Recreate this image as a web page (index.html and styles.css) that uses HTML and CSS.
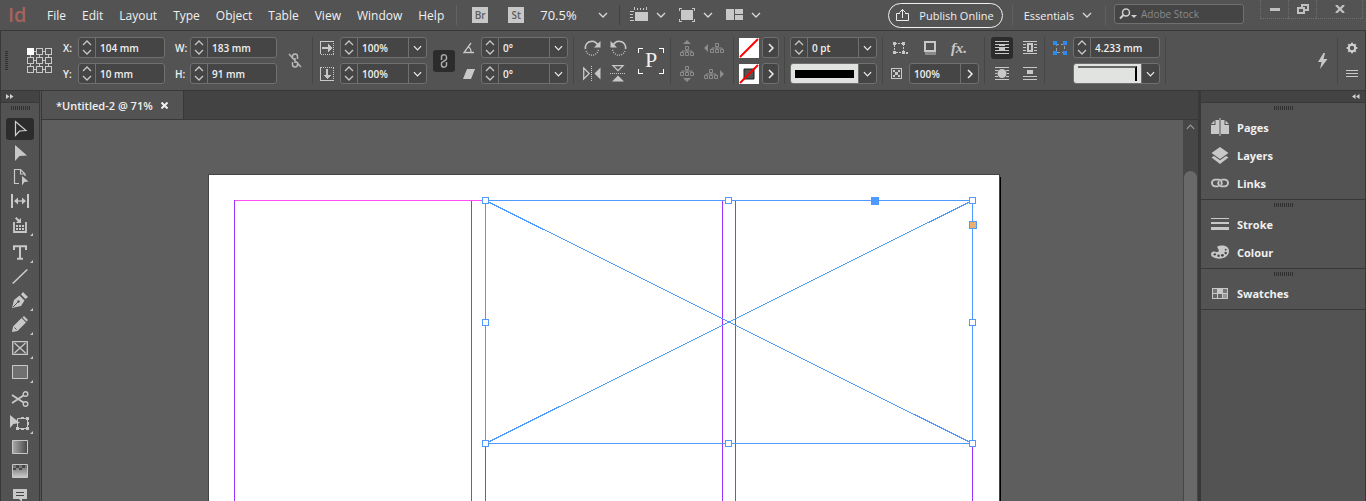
FILE: index.html
```html
<!DOCTYPE html>
<html lang="en">

<head>
    <meta charset="UTF-8" />
    <meta name="viewport" content="width=device-width, initial-scale=1.0" />
    <title>Untitled-2</title>
    <link rel="stylesheet" href="styles.css">
</head>

<body>
    <!-- shared icons -->
    <svg class="sprite" aria-hidden="true">
        <symbol id="down" viewBox="0 0 10 6"><path d="M1 1l4 4 4-4" fill="none" stroke="currentColor" stroke-width="1.3" /></symbol>
        <symbol id="up" viewBox="0 0 10 6"><path d="M1 5l4-4 4 4" fill="none" stroke="currentColor" stroke-width="1.3" /></symbol>
        <symbol id="right" viewBox="0 0 6 10"><path d="M1 1l4 4-4 4" fill="none" stroke="currentColor" stroke-width="1.5" /></symbol>
        <symbol id="tree" viewBox="0 0 14 10">
            <path d="M5.5.5h3v3h-3zM.5 6.5h3v3h-3zM5.5 6.5h3v3h-3zM10.5 6.5h3v3h-3zM7 3.5v3M2 6.500v-1.500h10v1.500" fill="none" stroke="currentColor" />
        </symbol>
    </svg>

    <header class="menubar">
        <div class="logo">Id</div>
        <nav class="menu" aria-label="Main menu">
            <a href="#">File</a>
            <a href="#">Edit</a>
            <a href="#">Layout</a>
            <a href="#">Type</a>
            <a href="#">Object</a>
            <a href="#">Table</a>
            <a href="#">View</a>
            <a href="#">Window</a>
            <a href="#">Help</a>
        </nav>
        <div class="app-tools">
            <button class="app-badge" type="button" title="Bridge">Br</button>
            <button class="app-badge" type="button" title="Stock">St</button>
            <div class="zoom">
                <select aria-label="Zoom level">
                    <option>70.5%</option>
                    <option>100%</option>
                </select>
                <svg class="chev" width="10" height="6"><use href="#down" /></svg>
            </div>
        </div>
        <div class="view-tools">
            <button type="button" aria-label="View options">
                <svg width="18" height="16" viewBox="0 0 18 16" shape-rendering="crispEdges">
                    <path d="M5 5h13v9H5z" fill="#c8c8c8" />
                    <path d="M4.500 0v3M7.500 1v2M10.500 1v2M13.500 1v2M16.500 0v3M0 4.500h4M0 7.500h3M0 10.500h3M0 13.500h4" stroke="#c8c8c8" />
                </svg>
                <svg class="chev" width="10" height="6"><use href="#down" /></svg>
            </button>
            <button type="button" aria-label="Screen mode">
                <svg width="16" height="14" viewBox="0 0 16 14" shape-rendering="crispEdges">
                    <path d="M2 2h12v10H2z" fill="#c8c8c8" />
                    <path d="M.5 3V.5H3M13 .5h2.500V3M15.500 11v2.500H13M3 13.500H.5V11" fill="none" stroke="#c8c8c8" />
                </svg>
                <svg class="chev" width="10" height="6"><use href="#down" /></svg>
            </button>
            <button type="button" aria-label="Arrange documents">
                <svg width="17" height="12" viewBox="0 0 17 12" shape-rendering="crispEdges">
                    <path d="M0 0h8v11H0zM9 0h8v5H9zM9 6h8v5H9z" fill="#c8c8c8" />
                </svg>
                <svg class="chev" width="10" height="6"><use href="#down" /></svg>
            </button>
        </div>
        <button class="publish" type="button">
            <svg width="13" height="14" viewBox="0 0 13 14" fill="none" stroke="#ececec">
                <path d="M4 5.500H.5v7h12v-7H9M6.500 10V1.500M3.500 4.500l3-3 3 3" />
            </svg>
            Publish Online
        </button>
        <button class="workspace-menu" type="button">
            Essentials
            <svg class="chev" width="10" height="6"><use href="#down" /></svg>
        </button>
        <label class="search">
            <svg width="18" height="12" viewBox="0 0 18 12">
                <circle cx="7" cy="4.500" r="3.500" fill="none" stroke="#d0d0d0" stroke-width="1.500" />
                <path d="M4.500 7L1 10.500" stroke="#d0d0d0" stroke-width="2" />
                <path d="M12 7h6l-3 3z" fill="#d0d0d0" />
            </svg>
            <input type="search" placeholder="Adobe Stock" aria-label="Search Adobe Stock">
        </label>
        <div class="window-buttons">
            <button type="button" aria-label="Minimise"><svg width="10" height="3"><path d="M0 0h10v3H0z" fill="#c0c0c0" /></svg></button>
            <button type="button" aria-label="Restore">
                <svg width="12" height="10" viewBox="0 0 12 10" shape-rendering="crispEdges" fill="none" stroke="#c0c0c0" stroke-width="2">
                    <path d="M1 4h6v5H1zM5 4V1h6v5H7" />
                </svg>
            </button>
            <button type="button" aria-label="Close">
                <svg width="10" height="8" viewBox="0 0 10 8"><path d="M1 0l8 8M9 0L1 8" stroke="#c0c0c0" stroke-width="2.200" /></svg>
            </button>
        </div>
    </header>

    <section class="control-bar" aria-label="Control panel">
        <div class="group position">
            <span class="grip-v span"></span>
            <svg class="span reference" width="26" height="26" viewBox="0 0 26 26" shape-rendering="crispEdges" fill="none" stroke="#c8c8c8">
                <path d="M7 3.500h3M16 3.500h3M7 12.500h3M16 12.500h3M7 21.500h3M16 21.500h3M3.500 7v3M3.500 16v3M12.500 7v3M12.500 16v3M21.500 7v3M21.500 16v3" />
                <path d="M9.500.5h6v6h-6zM18.500.5h6v6h-6zM.5 9.500h6v6h-6zM9.500 9.500h6v6h-6zM18.500 9.500h6v6h-6zM.5 18.500h6v6h-6zM9.500 18.500h6v6h-6zM18.500 18.500h6v6h-6z" fill="#535353" />
                <path d="M.5.5h6v6h-6z" fill="#fff" stroke="#fff" />
            </svg>
            <div class="labelled">
                <label for="posX">X:</label>
                <div class="field">
                    <span class="spin"><button type="button" aria-label="Increase X"><svg width="10" height="6"><use href="#up" /></svg></button><button type="button" aria-label="Decrease X"><svg width="10" height="6"><use href="#down" /></svg></button></span>
                    <input id="posX" type="text" value="104 mm">
                </div>
            </div>
            <div class="labelled">
                <label for="sizeW">W:</label>
                <div class="field">
                    <span class="spin"><button type="button" aria-label="Increase W"><svg width="10" height="6"><use href="#up" /></svg></button><button type="button" aria-label="Decrease W"><svg width="10" height="6"><use href="#down" /></svg></button></span>
                    <input id="sizeW" type="text" value="183 mm">
                </div>
            </div>
            <button class="plain span constrain" type="button" aria-label="Constrain proportions">
                <svg width="14" height="15" viewBox="0 0 14 15" fill="none" stroke="#b8b8b8" stroke-width="1.500">
                    <path d="M4.500 6V3.500a2.500 2.500 0 0 1 5 0V6M4.500 9v2.500a2.500 2.500 0 0 0 5 0V9M7 5v5M1 1l12 13" />
                </svg>
            </button>
            <div class="labelled">
                <label for="posY">Y:</label>
                <div class="field">
                    <span class="spin"><button type="button" aria-label="Increase Y"><svg width="10" height="6"><use href="#up" /></svg></button><button type="button" aria-label="Decrease Y"><svg width="10" height="6"><use href="#down" /></svg></button></span>
                    <input id="posY" type="text" value="10 mm">
                </div>
            </div>
            <div class="labelled">
                <label for="sizeH">H:</label>
                <div class="field">
                    <span class="spin"><button type="button" aria-label="Increase H"><svg width="10" height="6"><use href="#up" /></svg></button><button type="button" aria-label="Decrease H"><svg width="10" height="6"><use href="#down" /></svg></button></span>
                    <input id="sizeH" type="text" value="91 mm">
                </div>
            </div>
        </div>

        <div class="group scale">
            <svg width="14" height="14" viewBox="0 0 14 14" shape-rendering="crispEdges" fill="none" stroke="#c8c8c8">
                <path d="M.5 13V.5H14" /><path d="M13.500 2v12M1 13.500h13" stroke-dasharray="1 1" />
                <path d="M2 7h7" stroke-width="2" /><path d="M8 3l4 4-4 4z" fill="#c8c8c8" stroke="none" />
            </svg>
            <div class="field">
                <span class="spin"><button type="button" aria-label="Increase X scale"><svg width="10" height="6"><use href="#up" /></svg></button><button type="button" aria-label="Decrease X scale"><svg width="10" height="6"><use href="#down" /></svg></button></span>
                <input type="text" value="100%" aria-label="X scale">
                <button class="drop" type="button" aria-label="X scale presets"><svg width="9" height="6"><use href="#down" /></svg></button>
            </div>
            <button class="pressed span link-scale" type="button" aria-label="Constrain scaling">
                <svg width="8" height="14" viewBox="0 0 8 14" fill="none" stroke="#aaa" stroke-width="1.500">
                    <path d="M1.500 6V3a2.500 2.200 0 0 1 5 0v1.500a2.500 2 0 0 1-3 2M6.500 8v3a2.500 2.200 0 0 1-5 0V9.500a2.500 2 0 0 1 3-2" />
                </svg>
            </button>
            <svg width="14" height="12" viewBox="0 0 14 12" fill="none" stroke="#c8c8c8" stroke-width="1.300">
                <path d="M10 1L3 10.500h10M7 5q3 1 3 5" />
            </svg>
            <div class="field">
                <span class="spin"><button type="button" aria-label="Increase rotation"><svg width="10" height="6"><use href="#up" /></svg></button><button type="button" aria-label="Decrease rotation"><svg width="10" height="6"><use href="#down" /></svg></button></span>
                <input type="text" value="0°" aria-label="Rotation angle">
                <button class="drop" type="button" aria-label="Rotation presets"><svg width="9" height="6"><use href="#down" /></svg></button>
            </div>
            <svg width="14" height="14" viewBox="0 0 14 14" shape-rendering="crispEdges" fill="none" stroke="#c8c8c8">
                <path d="M.5 0v13.500H14" /><path d="M1 .5h13M13.500 1v12" stroke-dasharray="1 1" />
                <path d="M7 2v7" stroke-width="2" /><path d="M3 8h8l-4 4z" fill="#c8c8c8" stroke="none" />
            </svg>
            <div class="field">
                <span class="spin"><button type="button" aria-label="Increase Y scale"><svg width="10" height="6"><use href="#up" /></svg></button><button type="button" aria-label="Decrease Y scale"><svg width="10" height="6"><use href="#down" /></svg></button></span>
                <input type="text" value="100%" aria-label="Y scale">
                <button class="drop" type="button" aria-label="Y scale presets"><svg width="9" height="6"><use href="#down" /></svg></button>
            </div>
            <svg width="14" height="10" viewBox="0 0 14 10"><path d="M6 0h8l-4 10H2z" fill="#c8c8c8" /></svg>
            <div class="field">
                <span class="spin"><button type="button" aria-label="Increase shear"><svg width="10" height="6"><use href="#up" /></svg></button><button type="button" aria-label="Decrease shear"><svg width="10" height="6"><use href="#down" /></svg></button></span>
                <input type="text" value="0°" aria-label="Shear angle">
                <button class="drop" type="button" aria-label="Shear presets"><svg width="9" height="6"><use href="#down" /></svg></button>
            </div>
        </div>

        <div class="group rotate">
            <button class="plain" type="button" aria-label="Rotate clockwise">
                <svg width="17" height="16" viewBox="0 0 17 16" fill="none" stroke="#c8c8c8" stroke-width="1.700">
                    <path d="M1.500 9a6.500 6.500 0 0 1 12-4.500" /><path d="M2 11a6.500 6.500 0 0 0 12.500-1.500" stroke-dasharray="1 1.200" stroke-width="1.300" />
                    <path d="M16.500 1v6.500H10z" fill="#c8c8c8" stroke="none" />
                </svg>
            </button>
            <button class="plain" type="button" aria-label="Rotate anticlockwise">
                <svg width="17" height="16" viewBox="0 0 17 16" fill="none" stroke="#c8c8c8" stroke-width="1.700">
                    <path d="M15.500 9a6.500 6.500 0 0 0-12-4.500" /><path d="M15 11a6.500 6.500 0 0 1-12.500-1.500" stroke-dasharray="1 1.200" stroke-width="1.300" />
                    <path d="M.5 1v6.500H7z" fill="#c8c8c8" stroke="none" />
                </svg>
            </button>
            <div class="glyph span">P</div>
            <button class="plain" type="button" aria-label="Flip horizontal">
                <svg width="18" height="15" viewBox="0 0 18 15">
                    <path d="M.7 2l5.500 5.500L.7 13z" fill="none" stroke="#c8c8c8" stroke-width="1.300" /><path d="M17.500 1.500v12l-6-6z" fill="#c8c8c8" />
                    <path d="M8.500 0v15" stroke="#c8c8c8" stroke-dasharray="1 1" />
                </svg>
            </button>
            <button class="plain" type="button" aria-label="Flip vertical">
                <svg width="16" height="17" viewBox="0 0 16 17">
                    <path d="M3 .7h10L8 5.700z" fill="none" stroke="#c8c8c8" stroke-width="1.300" /><path d="M2 16.500h12l-6-6z" fill="#c8c8c8" />
                    <path d="M0 8.500h16" stroke="#c8c8c8" stroke-dasharray="1 1" />
                </svg>
            </button>
        </div>

        <div class="group hierarchy">
            <button class="plain" type="button" disabled aria-label="Select container">
                <svg width="14" height="16" viewBox="0 0 14 16"><path d="M3 4l4-4 4 4z" fill="currentColor" /><use href="#tree" y="6" width="14" height="10" /></svg>
            </button>
            <button class="plain" type="button" disabled aria-label="Select previous object">
                <svg width="20" height="12" viewBox="0 0 20 12"><path d="M4 2v8L0 6z" fill="currentColor" /><use href="#tree" x="6" y="1" width="14" height="10" /></svg>
            </button>
            <button class="plain" type="button" disabled aria-label="Select content">
                <svg width="14" height="16" viewBox="0 0 14 16"><path d="M3 12l4 4 4-4z" fill="currentColor" /><use href="#tree" width="14" height="10" /></svg>
            </button>
            <button class="plain" type="button" disabled aria-label="Select next object">
                <svg width="20" height="12" viewBox="0 0 20 12"><path d="M16 2v8l4-4z" fill="currentColor" /><use href="#tree" y="1" width="14" height="10" /></svg>
            </button>
        </div>

        <div class="group paint">
            <button class="plain" type="button" aria-label="Fill">
                <svg width="20" height="20" viewBox="0 0 20 20"><path d="M0 0h20v20H0z" fill="#fff" /><path d="M1 19L19 1" stroke="#f00" stroke-width="2" /></svg>
            </button>
            <button class="box" type="button" aria-label="Fill options"><svg width="6" height="10"><use href="#right" /></svg></button>
            <button class="plain" type="button" aria-label="Stroke">
                <svg width="20" height="20" viewBox="0 0 20 20"><path d="M0 0h20v20H0z" fill="#fff" /><path d="M5 5h10v10H5z" fill="#535353" stroke="#222" /><path d="M1 19L19 1" stroke="#f00" stroke-width="2" /></svg>
            </button>
            <button class="box" type="button" aria-label="Stroke options"><svg width="6" height="10"><use href="#right" /></svg></button>
        </div>

        <div class="group weight">
            <div class="field">
                <span class="spin"><button type="button" aria-label="Increase weight"><svg width="10" height="6"><use href="#up" /></svg></button><button type="button" aria-label="Decrease weight"><svg width="10" height="6"><use href="#down" /></svg></button></span>
                <input type="text" value="0 pt" aria-label="Stroke weight">
                <button class="drop" type="button" aria-label="Weight presets"><svg width="9" height="6"><use href="#down" /></svg></button>
            </div>
            <button class="field preview" type="button" aria-label="Stroke type">
                <span class="sample"><span class="solid-line"></span></span>
                <span class="drop"><svg width="9" height="6"><use href="#down" /></svg></span>
            </button>
        </div>

        <div class="group effects">
            <div class="row icons">
                <button class="plain" type="button" aria-label="Corner options">
                    <svg width="16" height="12" viewBox="0 0 16 12" shape-rendering="crispEdges"><path d="M1.500 1.500h9v9h-9z" fill="none" stroke="#c8c8c8" stroke-dasharray="2 1" /><path d="M0 0h3v3H0zM9 0h3v3H9zM0 9h3v3H0zM9 9h3v3H9zM13 10h2v2h-2z" fill="#c8c8c8" /></svg>
                </button>
                <button class="plain" type="button" aria-label="Drop shadow">
                    <svg width="14" height="14" viewBox="0 0 14 14" shape-rendering="crispEdges"><path d="M2 11h11v3H2z" fill="#8a8a8a" /><path d="M2 1h10v9H2z" fill="none" stroke="#c8c8c8" stroke-width="2" /></svg>
                </button>
                <button class="plain fx" type="button" aria-label="Effects">fx.</button>
            </div>
            <div class="row">
                <svg width="11" height="11" viewBox="0 0 11 11" shape-rendering="crispEdges"><path d="M.5.5h10v10H.5z" fill="none" stroke="#c8c8c8" /><path d="M2 2h2v2H2zM7 2h2v2H7zM4 4h3v3H4zM2 7h2v2H2zM7 7h2v2H7z" fill="#c8c8c8" /></svg>
                <div class="field short">
                    <input type="text" value="100%" aria-label="Opacity">
                    <button class="drop" type="button" aria-label="Opacity slider"><svg width="6" height="10"><use href="#right" /></svg></button>
                </div>
            </div>
        </div>

        <div class="group wrap">
            <button class="pressed" type="button" aria-label="No text wrap">
                <svg width="14" height="13" viewBox="0 0 14 13" shape-rendering="crispEdges"><path d="M0 .5h14M0 3.500h14M0 6.500h14M0 9.500h14M0 12.500h14" stroke="#c8c8c8" /><path d="M4 3h6v2H4zM4 6h6v3H4z" fill="#c8c8c8" /></svg>
            </button>
            <button class="plain" type="button" aria-label="Wrap around bounding box">
                <svg width="14" height="13" viewBox="0 0 14 13" shape-rendering="crispEdges" fill="none" stroke="#c8c8c8"><path d="M0 .5h14M0 12.500h14M0 3.500h3M0 6.500h3M0 9.500h3M11 3.500h3M11 6.500h3M11 9.500h3" /><path d="M5 3h4v7H5z" stroke-width="2" /></svg>
            </button>
            <button class="plain" type="button" aria-label="Wrap around object shape">
                <svg width="14" height="13" viewBox="0 0 14 13"><path d="M0 .5h14M0 3.500h3M11 3.500h3M0 6.500h2M12 6.500h2M0 9.500h3M11 9.500h3M0 12.500h14" stroke="#c8c8c8" /><circle cx="7" cy="6.500" r="4.500" fill="#c8c8c8" /></svg>
            </button>
            <button class="plain" type="button" aria-label="Jump object">
                <svg width="14" height="13" viewBox="0 0 14 13" shape-rendering="crispEdges"><path d="M0 .5h14M0 9.500h14M0 12.500h14" stroke="#c8c8c8" /><path d="M4 3h6v4H4z" fill="#c8c8c8" /></svg>
            </button>
        </div>

        <div class="group corner">
            <svg width="14" height="14" viewBox="0 0 14 14" shape-rendering="crispEdges"><path d="M3 3h8v8H3z" fill="none" stroke="#999" stroke-dasharray="3 2" /><path d="M0 0h4v4H0zM10 0h4v4h-4zM0 10h4v4H0zM10 10h4v4h-4z" fill="#2d8ceb" /></svg>
            <div class="field">
                <span class="spin"><button type="button" aria-label="Increase corner size"><svg width="10" height="6"><use href="#up" /></svg></button><button type="button" aria-label="Decrease corner size"><svg width="10" height="6"><use href="#down" /></svg></button></span>
                <input type="text" value="4.233 mm" aria-label="Corner size">
            </div>
            <button class="field preview second" type="button" aria-label="Corner shape">
                <span class="sample"><span class="corner-line"></span></span>
                <span class="drop"><svg width="9" height="6"><use href="#down" /></svg></span>
            </button>
        </div>

        <div class="group quick">
            <button class="plain span" type="button" aria-label="Quick apply">
                <svg width="11" height="16" viewBox="0 0 11 16"><path d="M6.500 0L1 9h3.500L3 16l7.500-10H6.500L8 0z" fill="#c8c8c8" /></svg>
            </button>
        </div>
        <div class="group settings">
            <button class="plain" type="button" aria-label="Settings">
                <svg width="12" height="12" viewBox="0 0 12 12"><circle cx="6" cy="6" r="3.200" fill="none" stroke="#d0d0d0" stroke-width="2" /><path d="M6 .7v2M6 9.300v2M.7 6h2M9.300 6h2M2.300 2.300l1 1M8.700 8.700l1 1M2.300 9.700l1-1M8.700 3.300l1-1" stroke="#d0d0d0" stroke-width="2" /></svg>
            </button>
            <button class="plain" type="button" aria-label="Panel menu">
                <svg width="12" height="8" viewBox="0 0 12 8" shape-rendering="crispEdges"><path d="M0 .5h12M0 3.500h12M0 6.500h12" stroke="#c8c8c8" /></svg>
            </button>
        </div>
    </section>

    <main class="workspace">
        <aside class="toolbox" aria-label="Tools">
            <button class="collapse" type="button" aria-label="Expand tools"><svg width="8" height="5" viewBox="0 0 8 5"><path d="M0 0l3.500 2.500L0 5zM4 0l3.500 2.500L4 5z" fill="#d0d0d0" /></svg></button>
            <span class="grip-h"></span>
            <div class="tool-set">
                <button class="tool active" type="button" aria-label="Selection"><svg width="18" height="18" viewBox="0 0 18 18"><path d="M4.500 1.500v14l4-4.500 6.500-.5z" fill="none" stroke="#d0d0d0" stroke-width="1.200" /></svg></button>
                <button class="tool" type="button" aria-label="Direct selection"><svg width="18" height="18" viewBox="0 0 18 18"><path d="M4 1v16l4.500-5 7.500-.5z" fill="#c8c8c8" /></svg></button>
                <button class="tool" type="button" aria-label="Page"><svg width="18" height="18" viewBox="0 0 18 18"><path d="M8 15.500H3.500v-14h6l4.500 4.500v2M9.500 1.500V6H14" fill="none" stroke="#c8c8c8" stroke-width="1.200" /><path d="M11 8v9.500l2.500-3.500 4-.5z" fill="#c8c8c8" /></svg></button>
                <button class="tool" type="button" aria-label="Gap"><svg width="18" height="14" viewBox="0 0 18 14"><path d="M0 0h2v14H0zM16 0h2v14h-2z" fill="#c8c8c8" /><path d="M5 7h8" stroke="#c8c8c8" stroke-width="1.300" /><path d="M3 7l4-3.500v7zM15 7l-4-3.500v7z" fill="#c8c8c8" /></svg></button>
                <button class="tool more" type="button" aria-label="Content collector"><svg width="16" height="16" viewBox="0 0 16 16"><path d="M2 5v10h12V5" fill="none" stroke="#c8c8c8" stroke-width="1.800" /><path d="M4 8h2v2H4zM7 8h2v2H7zM10 8h2v2h-2zM4 11h2v2H4zM7 11h2v2H7zM10 11h2v2h-2zM9 6H4l1.700-1.700L3 1.500 4.500 0l2.700 2.800L9 1z" fill="#c8c8c8" /></svg></button>
            </div>
            <div class="tool-set">
                <button class="tool more" type="button" aria-label="Type"><svg width="14" height="15" viewBox="0 0 14 15"><path d="M1 5V1.300h12V5M7 1v13M4 13.800h6" fill="none" stroke="#c8c8c8" stroke-width="2" /></svg></button>
                <button class="tool" type="button" aria-label="Line"><svg width="16" height="15" viewBox="0 0 16 15"><path d="M.7 14.500L15.300.5" stroke="#c8c8c8" stroke-width="1.600" /></svg></button>
                <button class="tool more" type="button" aria-label="Pen"><svg width="16" height="16" viewBox="0 0 16 16"><path d="M0 16l2-8 5.500-4.500 5 5L9 14zM9 2.500l2-2.500 5 5-2.500 2z" fill="#c8c8c8" /><path d="M1 15l5-5" stroke="#535353" /><circle cx="6.500" cy="9.500" r="1.200" fill="#535353" /></svg></button>
                <button class="tool more" type="button" aria-label="Pencil"><svg width="16" height="16" viewBox="0 0 16 16"><path d="M0 16l1-5.500L9.500 2 14 6.500 5.500 15zM10.500 1.500L12 0l4 4-1.500 1.500z" fill="#c8c8c8" /><path d="M2.500 11.500l2 2" stroke="#535353" /></svg></button>
                <button class="tool more" type="button" aria-label="Rectangle frame"><svg width="16" height="14" viewBox="0 0 16 14"><path d="M.7.7h14.600v12.600H.7zM2.500 2l11 10M13.500 2l-11 10" fill="none" stroke="#c8c8c8" stroke-width="1.300" /></svg></button>
                <button class="tool more" type="button" aria-label="Rectangle"><svg width="16" height="14" viewBox="0 0 16 14"><path d="M.5.5h15v13H.5z" fill="#707070" stroke="#c8c8c8" /></svg></button>
            </div>
            <div class="tool-set">
                <button class="tool" type="button" aria-label="Scissors"><svg width="18" height="16" viewBox="0 0 18 16" fill="none" stroke="#c8c8c8"><circle cx="14.500" cy="3" r="2.300" stroke-width="1.400" /><circle cx="14.500" cy="13" r="2.300" stroke-width="1.400" /><path d="M1 4l11.500 7.500M1 12l11.500-7.500" stroke-width="1.900" /></svg></button>
                <button class="tool more" type="button" aria-label="Free transform"><svg width="20" height="16" viewBox="0 0 20 16"><path d="M7.500 3.500h10v10h-10z" fill="none" stroke="#c8c8c8" /><path d="M6 12h3v3H6zM16 12h3v3h-3zM16 2h3v3h-3zM11 2h3v2h-3zM11 13h3v2h-3zM17 7h2v3h-2z" fill="#c8c8c8" /><path d="M0 0v13l3.500-4L10 8z" fill="#c8c8c8" /></svg></button>
                <button class="tool" type="button" aria-label="Gradient swatch">
                    <svg width="16" height="14" viewBox="0 0 16 14"><defs><linearGradient id="gradH"><stop offset="0" stop-color="#aaa" /><stop offset="1" stop-color="#484848" /></linearGradient></defs><path d="M.5.5h15v13H.5z" fill="url(#gradH)" stroke="#c8c8c8" /></svg>
                </button>
                <button class="tool" type="button" aria-label="Gradient feather">
                    <svg width="16" height="14" viewBox="0 0 16 14"><defs><linearGradient id="gradV" x2="0" y2="1"><stop offset="0" stop-color="#666" /><stop offset="1" stop-color="#ccc" /></linearGradient></defs><path d="M.5.5h15v13H.5z" fill="url(#gradV)" stroke="#c8c8c8" /><path d="M4 1h3v3H4zM10 1h3v3h-3zM1 4h3v2H1zM7 4h3v2H7z" fill="#484848" /></svg>
                </button>
                <button class="tool" type="button" aria-label="Note"><svg width="14" height="14" viewBox="0 0 14 14"><path d="M0 1h14v10H9v3l-3-3H0z" fill="#c8c8c8" /><path d="M3 4.500h8M3 7.500h8" stroke="#444" /></svg></button>
            </div>
        </aside>

        <section class="document">
            <div class="tabs">
                <div class="tab">
                    <a href="#">*Untitled-2 @ 71%</a>
                    <button type="button" aria-label="Close tab"><svg width="7" height="7" viewBox="0 0 7 7"><path d="M.5.5l6 6M6.500.5l-6 6" stroke="#f0f0f0" stroke-width="2" /></svg></button>
                </div>
            </div>
            <div class="view">
                <div class="canvas">
                    <div class="page">
                        <svg width="790" height="326" viewBox="0 0 790 326" shape-rendering="crispEdges" fill="none" role="img" aria-label="Page with an empty frame selected">
                            <!-- margins and column guides -->
                            <path d="M25 25.500h738" stroke="#ff4ff8" />
                            <path d="M25.500 25v301M262.500 26v300M276.500 26v300M513.500 26v300M526.500 26v300M763.500 26v300" stroke="#9933ff" />
                            <!-- selected frame -->
                            <path d="M276.500 25.500h487v243h-487zM276.500 25.500l487 243M763.500 25.500l-487 243" stroke="#4f99ff" />
                            <g fill="#fff" stroke="#4f99ff">
                                <path d="M273.500 22.500h6v6h-6zM516.500 22.500h6v6h-6zM760.500 22.500h6v6h-6z" />
                                <path d="M273.500 144.500h6v6h-6zM760.500 144.500h6v6h-6z" />
                                <path d="M273.500 265.500h6v6h-6zM516.500 265.500h6v6h-6zM760.500 265.500h6v6h-6z" />
                            </g>
                            <path d="M662 22h8v8h-8z" fill="#4f99ff" />
                            <path d="M760.500 46.500h7v7h-7z" fill="#e8b070" stroke="#4f99ff" />
                        </svg>
                    </div>
                </div>
                <div class="scrollbar">
                    <button type="button" aria-label="Scroll up"><svg width="9" height="6"><use href="#up" /></svg></button>
                    <div class="thumb"></div>
                </div>
            </div>
        </section>

        <aside class="panels" aria-label="Panels">
            <button class="collapse" type="button" aria-label="Expand panels"><svg width="8" height="5" viewBox="0 0 8 5"><path d="M3.500 0v5L0 2.500zM7.500 0v5L4 2.500z" fill="#d0d0d0" /></svg></button>
            <div class="panel-set">
                <span class="grip-h"></span>
                <button type="button">
                    <svg width="18" height="18" viewBox="0 0 18 18"><path d="M8 2v14H0V7h4.500V2zM10 2v14h8V7h-4.500V2zM3.500 2.500V6H0zM14.500 2.500V6H18z" fill="#c8c8c8" /><path d="M9 0v18" stroke="#c8c8c8" /></svg>
                    Pages
                </button>
                <button type="button">
                    <svg width="18" height="17" viewBox="0 0 18 17"><path d="M9 0l8.500 6L9 12 .5 6zM.5 10.500L3 9l6 4.300L15 9l2.500 1.500L9 17z" fill="#c8c8c8" /></svg>
                    Layers
                </button>
                <button type="button">
                    <svg width="19" height="10" viewBox="0 0 19 10" fill="none" stroke="#c8c8c8" stroke-width="1.900"><path d="M8 8.500H4.500a3.500 3.500 0 0 1 0-7H8a3.300 3.300 0 0 1 2.500 5.500M11 1.500h3.500a3.500 3.500 0 0 1 0 7H11a3.300 3.300 0 0 1-2.500-5.500" /></svg>
                    Links
                </button>
            </div>
            <div class="panel-set">
                <span class="grip-h"></span>
                <button type="button">
                    <svg width="18" height="12" viewBox="0 0 18 12" shape-rendering="crispEdges"><path d="M0 0h18v1H0zM0 4h18v2H0zM0 9h18v3H0z" fill="#c8c8c8" /></svg>
                    Stroke
                </button>
                <button type="button">
                    <svg width="19" height="14" viewBox="0 0 19 14"><path d="M7 1C10-.5 19-1 19 6c0 5-5 8-10 8-5.500 0-9-2-9-4.500C0 6.500 3 6 5 7c2 .5 4-.5 3-2.500C7.500 3 6 2.500 7 1z" fill="#c8c8c8" /><g fill="#484848"><circle cx="4" cy="9.500" r="1.300" /><circle cx="8" cy="11" r="1.300" /><circle cx="12" cy="10.500" r="1.500" /><circle cx="15.500" cy="8" r="1.300" /><circle cx="15.500" cy="4.500" r="1" /></g></svg>
                    Colour
                </button>
            </div>
            <div class="panel-set">
                <span class="grip-h"></span>
                <button type="button">
                    <svg width="16" height="11" viewBox="0 0 16 11" shape-rendering="crispEdges"><path d="M0 0h16v11H0z" fill="#c8c8c8" /><path d="M1 1h4v4H1zM11 1h4v4h-4z" fill="#777" /><path d="M1 6h4v4H1zM6 6h4v4H6z" fill="#666" /><path d="M11 6h4v4h-4z" fill="#999" /></svg>
                    Swatches
                </button>
            </div>
        </aside>
    </main>
</body>

</html>
```
FILE: styles.css
```css
:root {
    --bar: #535353;
    --dark: #434343;
    --line: #383838;
    --field: #454545;
    --field-line: #707070;
    --icon: #c8c8c8;
    --text: #f0f0f0;
}

* {
    margin: 0;
    padding: 0;
    box-sizing: border-box;
}

body {
    height: 100vh;
    display: flex;
    flex-direction: column;
    overflow: hidden;
    background: var(--bar);
    color: var(--text);
    font-family: "Open Sans", "Noto Sans", sans-serif;
    font-size: 12px;
}

button,
input,
select {
    font: inherit;
    color: inherit;
    background: none;
    border: none;
    outline: none;
}

button {
    display: flex;
    align-items: center;
    justify-content: center;
}

a {
    color: inherit;
    text-decoration: none;
}

svg {
    display: block;
    flex: none;
}

.sprite {
    position: absolute;
    width: 0;
    height: 0;
}

.chev {
    color: #d8d8d8;
}

/* Menu bar */
.menubar {
    display: flex;
    align-items: center;
    height: 31px;
    border-bottom: 1px solid var(--line);
    white-space: nowrap;
}

.logo {
    width: 47px;
    padding-left: 8px;
    color: #a8625c;
    font-size: 20px;
    font-weight: 600;
    line-height: 28px;
}

.menu {
    display: flex;
    gap: 16px;
}

.app-tools {
    display: flex;
    align-items: center;
    gap: 20px;
    height: 20px;
    margin-left: 12px;
    padding: 0 11px 0 15px;
    border-left: 1px solid #636363;
    border-right: 1px solid #424242;
}

.app-badge {
    width: 16px;
    height: 16px;
    background: var(--icon);
    color: #5c5c5c;
    font-size: 10px;
    font-weight: 600;
}

.zoom {
    display: flex;
    align-items: center;
    width: 68px;
    margin-left: -4px;
}

.zoom select {
    appearance: none;
    flex: 1;
    font-size: 13px;
}

.view-tools {
    display: flex;
    gap: 13px;
    margin-left: 10px;
}

.view-tools button {
    gap: 8px;
}

.publish {
    gap: 10px;
    height: 25px;
    margin-left: auto;
    padding: 0 8px 0 7px;
    border: 1px solid var(--text);
    border-radius: 13px;
    font-size: 11px;
}

.workspace-menu {
    gap: 8px;
    height: 20px;
    margin-left: 9px;
    padding: 0 13px 0 11px;
    border-left: 1px solid #606060;
    border-right: 1px solid #606060;
    font-size: 11px;
}

.search {
    display: flex;
    align-items: center;
    gap: 4px;
    width: 130px;
    height: 20px;
    margin: 0 16px 3px 8px;
    padding: 0 4px;
    background: var(--field);
    border: 1px solid var(--field-line);
    border-radius: 3px;
}

.search input {
    width: 100%;
    font-size: 10px;
}

.search input::placeholder {
    color: #8a8a8a;
}

.window-buttons {
    display: flex;
    align-self: flex-start;
    margin-right: 3px;
}

.window-buttons button {
    width: 28px;
    height: 19px;
    border: 1px dotted #707070;
    border-top: none;
    border-right: none;
}

.window-buttons button:last-child {
    width: 47px;
    border-right: 1px dotted #707070;
}

/* Control bar */
.control-bar {
    display: flex;
    height: 60px;
    padding: 6px 0;
    border: 1px solid var(--line);
    border-top: none;
    font-size: 10px;
}

.group {
    display: grid;
    grid-template-rows: 21px 21px;
    gap: 5px 10px;
    align-items: center;
    border-right: 1px solid #464646;
}

.span {
    grid-row: 1 / 3;
}

.grip-v {
    grid-column: 1;
    width: 3px;
    height: 19px;
    background: repeating-linear-gradient(#303030 0 1px, transparent 1px 2px);
}

.grip-h {
    display: block;
    width: 19px;
    height: 4px;
    background: repeating-linear-gradient(90deg, #303030 0 1px, transparent 1px 2px);
}

.position {
    grid-template-columns: 12px 26px 102px 102px 15px;
    padding: 0 10px 0 4px;
}

.reference {
    grid-column: 2;
}

.constrain {
    grid-column: 5;
}

.labelled {
    display: grid;
    grid-template-columns: 15px 87px;
    align-items: center;
    font-weight: 600;
}

.field {
    display: flex;
    width: 87px;
    height: 21px;
    background: var(--field);
    border: 1px solid var(--field-line);
    border-radius: 3px;
    overflow: hidden;
    font-size: 10px;
    font-weight: 600;
}

.field input {
    flex: 1;
    width: 0;
    padding-left: 4px;
}

.spin {
    display: flex;
    flex-direction: column;
    width: 17px;
    padding: 1px 0;
    border-right: 1px solid var(--field-line);
    color: var(--icon);
}

.spin button {
    flex: 1;
}

.drop {
    display: flex;
    align-items: center;
    justify-content: center;
    width: 18px;
    border-left: 1px solid var(--field-line);
}

.plain {
    width: 100%;
}

.pressed {
    width: 22px;
    height: 22px;
    background: #2c2c2c;
    border-radius: 3px;
}

.box {
    height: 21px;
    background: var(--field);
    border: 1px solid var(--field-line);
    border-radius: 3px;
}

.scale {
    grid-template-columns: 14px 87px 22px 14px 87px;
    column-gap: 6px;
    padding: 0 5px 0 7px;
}

.link-scale {
    grid-column: 3;
}

.rotate {
    grid-template-columns: 16px 16px 28px;
    padding: 0 6px 0 10px;
}

.glyph {
    grid-column: 3;
    width: 26px;
    height: 26px;
    justify-self: end;
    /* corner brackets around the sample letter */
    background:
        linear-gradient(#fff, #fff) 0 0 / 5px 1px,
        linear-gradient(#fff, #fff) 0 0 / 1px 5px,
        linear-gradient(#fff, #fff) 100% 0 / 5px 1px,
        linear-gradient(#fff, #fff) 100% 0 / 1px 5px,
        linear-gradient(#fff, #fff) 0 100% / 5px 1px,
        linear-gradient(#fff, #fff) 0 100% / 1px 5px,
        linear-gradient(#fff, #fff) 100% 100% / 5px 1px,
        linear-gradient(#fff, #fff) 100% 100% / 1px 5px;
    background-repeat: no-repeat;
    font: 22px/24px "Liberation Serif", serif;
    text-align: center;
}

.hierarchy {
    grid-template-columns: 14px 20px;
    padding: 0 9px;
}

.hierarchy button {
    color: #8c8c8c;
}

.paint {
    grid-template-columns: 21px 17px;
    column-gap: 3px;
    padding: 0 5px 0 4px;
}

.weight {
    padding: 0 5px;
}

.sample {
    display: flex;
    align-items: center;
    align-self: stretch;
    flex: 1;
    padding: 0 4px;
    background: #e0e3df;
}

.preview .drop {
    align-self: stretch;
}

.solid-line {
    flex: 1;
    height: 8px;
    background: #000;
}

.corner-line {
    flex: 1;
    height: 15px;
    border-top: 2px solid #686868;
    border-right: 2px solid #000;
}

.effects {
    padding: 0 5px 0 8px;
}

.row {
    display: flex;
    align-items: center;
    gap: 7px;
}

.icons {
    gap: 13px;
    padding-left: 2px;
}

.icons .plain {
    width: 16px;
}

.fx {
    color: var(--icon);
    font: italic bold 15px/20px "Liberation Serif", serif;
}

.short {
    width: 70px;
}

.wrap {
    grid-template-columns: 22px 16px;
    column-gap: 9px;
    padding: 0 6px;
}

.corner {
    grid-template-columns: 16px 87px;
    column-gap: 4px;
    padding: 0 5px 0 8px;
}

.second {
    grid-column: 2;
}

.quick {
    margin-left: auto;
    padding: 0 9px;
}

.settings {
    width: 27px;
    border: none;
}

/* Workspace */
.workspace {
    flex: 1;
    display: flex;
    min-height: 0;
    border: 1px solid var(--line);
    border-top: none;
    border-bottom: none;
}

.collapse {
    width: 100%;
    height: 12px;
    padding: 0 5px;
    background: var(--dark);
    border-bottom: 1px solid var(--line);
}

.toolbox {
    display: flex;
    flex-direction: column;
    align-items: center;
    width: 39px;
    flex: none;
    border-right: 1px solid var(--line);
    overflow: hidden;
}

.toolbox .collapse {
    flex: none;
    justify-content: flex-start;
}

.toolbox .grip-h {
    flex: none;
    margin: 3px 0 8px;
}

.tool-set {
    flex: none;
    margin-bottom: 3px;
}

.tool {
    position: relative;
    width: 28px;
    height: 22px;
    margin-bottom: 2px;
    border-radius: 3px;
}

.tool.active {
    background: #2c2c2c;
}

/* little triangle for tools with a flyout */
.more::after {
    content: "";
    position: absolute;
    right: 1px;
    bottom: 0;
    border-left: 3px solid transparent;
    border-bottom: 3px solid var(--icon);
}

.document {
    flex: 1;
    display: flex;
    flex-direction: column;
    min-width: 0;
    margin-left: 1px;
    border-left: 1px solid var(--line);
}

.tabs {
    display: flex;
    height: 29px;
    background: var(--dark);
    border-bottom: 1px solid var(--line);
}

.tab {
    display: flex;
    align-items: center;
    gap: 8px;
    padding: 0 15px 0 14px;
    background: var(--bar);
    border-right: 1px solid var(--line);
    font-size: 11px;
    font-weight: 600;
    white-space: nowrap;
}

.view {
    flex: 1;
    display: flex;
    min-height: 0;
}

.canvas {
    flex: 1;
    min-width: 0;
    padding: 55px 0 0 167px;
    background: #5e5e5e;
    overflow: hidden;
}

.page {
    width: 790px;
    background: #fff;
    outline: 1px solid #444;
    box-shadow: 2px 2px 0 #000;
}

.scrollbar {
    display: flex;
    flex-direction: column;
    width: 15px;
    background: #474747;
}

.scrollbar button {
    height: 14px;
    color: #999;
}

.thumb {
    flex: 1;
    margin: 37px 1px 0;
    background: #696969;
    border-radius: 7px 7px 0 0;
}

.panels {
    width: 167px;
    flex: none;
    border-left: 3px solid var(--line);
}

.panels .collapse {
    justify-content: flex-end;
}

.panel-set {
    padding-bottom: 2px;
    border-bottom: 1px solid var(--line);
}

.panel-set .grip-h {
    margin: 0 auto 3px;
    border-top: 3px solid var(--bar);
    height: 7px;
}

.panel-set button {
    width: 100%;
    height: 28px;
    justify-content: flex-start;
    padding-left: 10px;
    gap: 8px;
    font-size: 11px;
    font-weight: 700;
}

.panel-set svg {
    width: 18px;
}
```
